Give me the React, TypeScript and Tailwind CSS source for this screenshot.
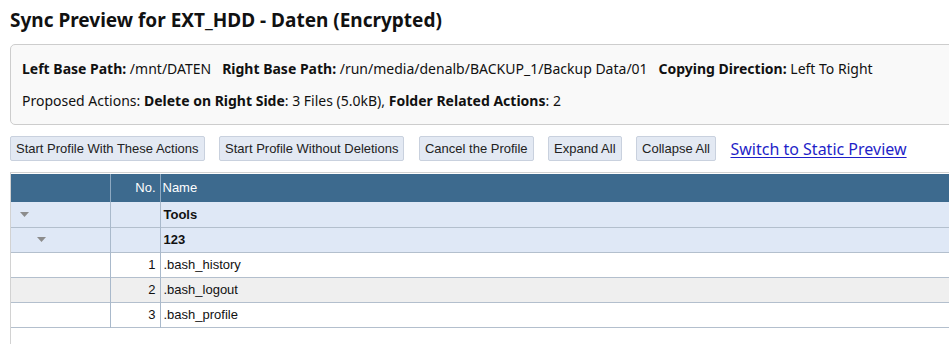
const buttons = [
    'Start Profile With These Actions',
    'Start Profile Without Deletions',
    'Cancel the Profile',
    'Expand All',
    'Collapse All',
];

type Row = { kind: 'group'; level: number; name: string } | { kind: 'file'; no: number; name: string };

const rows: Row[] = [
    { kind: 'group', level: 0, name: 'Tools' },
    { kind: 'group', level: 1, name: '123' },
    { kind: 'file', no: 1, name: '.bash_history' },
    { kind: 'file', no: 2, name: '.bash_logout' },
    { kind: 'file', no: 3, name: '.bash_profile' },
];

function Caret() {
    return (
        <svg width="9" height="5" viewBox="0 0 9 5" className="block">
            <path d="M0 0 L9 0 L4.5 5 Z" fill="#8c8c8c" />
        </svg>
    );
}

export default function App() {
    return (
        <div className="w-[949px] h-[344px] overflow-hidden bg-white text-[#111]">
            <div className="w-[1100px] pl-[10px]">
                <h1
                    className="pt-[6px] text-[19px] font-bold leading-[28px]"
                    style={{ fontFamily: '"Noto Sans", sans-serif' }}>
                    Sync Preview for EXT_HDD - Daten (Encrypted)
                </h1>
                <div
                    className="mt-[10px] rounded-[5px] border border-[#cdcdcd] bg-[#f9f9f9] px-[11px] pt-[14px] pb-[13px] text-[14px] leading-[20px]"
                    style={{ fontFamily: '"Noto Sans", sans-serif' }}>
                    <div>
                        <b>Left Base Path:</b> /mnt/DATEN&nbsp;&nbsp; <b>Right Base Path:</b>{' '}
                        /run/media/denalb/BACKUP_1/Backup Data/01&nbsp;&nbsp; <b>Copying Direction:</b> Left To
                        Right
                    </div>
                    <div className="mt-[12px]">
                        Proposed Actions: <b>Delete on Right Side</b>: 3 Files (5.0kB),{' '}
                        <b>Folder Related Actions</b>: 2
                    </div>
                </div>
                <div className="mt-[11px] flex items-center gap-[14.5px]">
                    {buttons.map(label => (
                        <button
                            key={label}
                            className="h-[25px] rounded-[2px] border border-[#c9d1de] bg-[#e3e9f3] px-[5px] text-[13px] text-[#222]"
                            style={{ fontFamily: '"Liberation Sans", Arial, sans-serif' }}>
                            {label}
                        </button>
                    ))}
                    <a
                        href="#"
                        className="text-[16px] leading-[22px] text-[#1f1fc8] underline underline-offset-2"
                        style={{ fontFamily: '"Noto Sans", sans-serif' }}>
                        Switch to Static Preview
                    </a>
                </div>
                <div
                    className="mt-[11px] h-[200px] border-t border-l border-[#d2d2d2] pt-px text-[13px]"
                    style={{ fontFamily: '"Liberation Sans", Arial, sans-serif' }}>
                    <table className="w-full table-fixed border-collapse">
                        <colgroup>
                            <col className="w-[99px]" />
                            <col className="w-[50px]" />
                            <col />
                        </colgroup>
                        <thead>
                            <tr className="h-[28px] bg-[#3d6a8e] text-white">
                                <th className="border-r border-[#8ea9c1] font-normal" />
                                <th className="border-r border-[#8ea9c1] pr-[4px] text-right font-normal">No.</th>
                                <th className="pl-[2px] text-left font-normal">Name</th>
                            </tr>
                        </thead>
                        <tbody>
                            {rows.map((row, i) =>
                                row.kind === 'group' ? (
                                    <tr key={i} className="h-[25px] border-b border-[#b3bfcd] bg-[#dfe8f6]">
                                        <td className="border-r border-[#a9b9cb]">
                                            <div className={row.level === 0 ? 'pl-[9px]' : 'pl-[26px]'}>
                                                <Caret />
                                            </div>
                                        </td>
                                        <td className="border-r border-[#a9b9cb]" />
                                        <td className="pl-[3px] font-bold">{row.name}</td>
                                    </tr>
                                ) : (
                                    <tr
                                        key={i}
                                        className={
                                            'h-[25px] border-b border-[#b3bfcd] ' +
                                            (row.no === 2 ? 'bg-[#efefef]' : 'bg-white')
                                        }>
                                        <td className="border-r border-[#a9b9cb]" />
                                        <td className="border-r border-[#a9b9cb] pr-[4px] text-right">{row.no}</td>
                                        <td className="pl-[3px]">{row.name}</td>
                                    </tr>
                                ),
                            )}
                        </tbody>
                    </table>
                </div>
            </div>
        </div>
    );
}
